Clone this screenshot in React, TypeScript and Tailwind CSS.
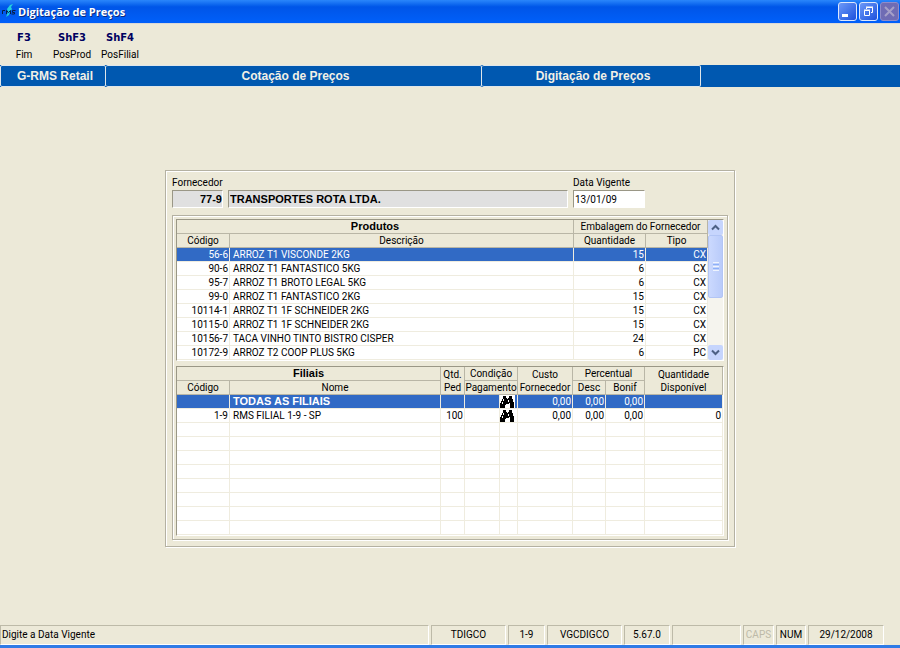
import type { ReactNode } from "react"
import clsx from "clsx"

type Product = {
  code: string
  description: string
  quantity: number
  type: string
}

type Branch = {
  code: string
  name: string
  ordered: string
  cost: string
  discount: string
  bonus: string
  available: string
}

const SHORTCUTS = [
  { keys: "F3", label: "Fim" },
  { keys: "ShF3", label: "PosProd" },
  { keys: "ShF4", label: "PosFilial" },
]

const PRODUCTS: Product[] = [
  { code: "56-6", description: "ARROZ T1 VISCONDE 2KG", quantity: 15, type: "CX" },
  { code: "90-6", description: "ARROZ T1 FANTASTICO 5KG", quantity: 6, type: "CX" },
  { code: "95-7", description: "ARROZ T1 BROTO LEGAL 5KG", quantity: 6, type: "CX" },
  { code: "99-0", description: "ARROZ T1 FANTASTICO 2KG", quantity: 15, type: "CX" },
  { code: "10114-1", description: "ARROZ T1 1F SCHNEIDER 2KG", quantity: 15, type: "CX" },
  { code: "10115-0", description: "ARROZ T1 1F SCHNEIDER 2KG", quantity: 15, type: "CX" },
  { code: "10156-7", description: "TACA VINHO TINTO BISTRO CISPER", quantity: 24, type: "CX" },
  { code: "10172-9", description: "ARROZ T2 COOP PLUS 5KG", quantity: 6, type: "PC" },
]

const BRANCHES: Branch[] = [
  { code: "", name: "TODAS AS FILIAIS", ordered: "", cost: "0,00", discount: "0,00", bonus: "0,00", available: "" },
  { code: "1-9", name: "RMS FILIAL 1-9 - SP", ordered: "100", cost: "0,00", discount: "0,00", bonus: "0,00", available: "0" },
]

const EMPTY_ROWS = 8

const SUNKEN = "border border-t-[#9a9786] border-l-[#9a9786] border-r-white border-b-white"
const ETCHED = "border border-[#b4b1a2] shadow-[inset_1px_1px_0_#fff,1px_1px_0_#fff]"
const HEAD = "whitespace-nowrap border-r border-b border-[#b9b6a6] bg-[#ece9d8] p-0 text-center font-normal"
const CELL = "h-[14px] border-r border-b border-[#efecdf] p-0"
const BOLD = "font-['Liberation_Sans',Arial,sans-serif] text-[11px] font-bold!"

const Logo = () => (
  <svg width="16" height="16" viewBox="0 0 16 16" aria-hidden="true">
    <path d="M6 5 L9 1 L12 0 L10 3 L11 5 L9 8 L8 11 L5 13 L7 8 Z" fill="#22d0dc" />
    <path d="M1.500 10V6.500H4M5.500 10V6.500l2 2 2-2V10M14.500 6.500h-3v2h2V10h-3" fill="none" stroke="#06204a" />
  </svg>
)

const Binoculars = () => (
  <svg width="14" height="12" viewBox="0 0 14 12" aria-hidden="true">
    <path
      d="M3 0h3v2h1v1h1V2h1V0h3v3h1v3h1v6h-4V9H9V8H6v1H5v3H0V7h1V5h1V3h1z"
      fill="#000"
      shapeRendering="crispEdges"
    />
    <path d="M3 3h1v2H3zM2 6h1v2H2zM8 4h1v2H8zM9 7h1v2H9z" fill="#fff" shapeRendering="crispEdges" />
  </svg>
)

const WindowButton = ({ label, disabled, children }: { label: string; disabled?: boolean; children: ReactNode }) => (
  <button
    type="button"
    aria-label={label}
    disabled={disabled}
    className={clsx(
      "flex size-[19px] items-center justify-center rounded-[3px] border",
      disabled
        ? "border-[#8f8cc9] bg-[#6f6cb4] text-[#a5a0c8]"
        : "border-[#dce7fd] bg-linear-to-br from-[#6d98f8] to-[#1c4fdc] text-white"
    )}
  >
    {children}
  </button>
)

const TitleBar = () => (
  <header className="flex h-[24px] items-center justify-between border-b border-[#d9d8d8] bg-linear-to-b from-[#2a86fb] via-[#0055e8] via-30% to-[#0060fa] pr-px pl-px">
    <div className="flex items-center gap-px">
      <Logo />
      <h1 className="pt-px font-['Open_Sans',sans-serif] text-[11px] font-bold text-white [text-shadow:1px_1px_0_#0a2a80]">
        Digitação de Preços
      </h1>
    </div>
    <div className="flex gap-[2px]">
      <WindowButton label="Minimizar">
        <svg width="13" height="13" viewBox="0 0 13 13">
          <path d="M1 9h6v3H1z" fill="currentColor" />
        </svg>
      </WindowButton>
      <WindowButton label="Restaurar">
        <svg width="13" height="13" viewBox="0 0 13 13" fill="none" stroke="currentColor">
          <path d="M4.500 4V2.500h6v5H9M4 2h7M2.500 5.500h5v5h-5zM2 5h6" />
        </svg>
      </WindowButton>
      <WindowButton label="Fechar" disabled>
        <svg width="13" height="13" viewBox="0 0 13 13" stroke="currentColor" strokeWidth="2">
          <path d="M2 2l9 9M11 2l-9 9" />
        </svg>
      </WindowButton>
    </div>
  </header>
)

const Toolbar = () => (
  <div className="flex h-[41px] items-start pt-[5px]">
    {SHORTCUTS.map(({ keys, label }) => (
      <button key={keys} type="button" className="flex w-12 flex-col items-center leading-[17px]">
        <span className="font-['DejaVu_Sans',sans-serif] text-[10px] font-bold text-[#000060]">{keys}</span>
        <span>{label}</span>
      </button>
    ))}
  </div>
)

const Tabs = () => (
  <nav className="flex h-[22px] bg-[#0058b0] font-['Liberation_Sans',Arial,sans-serif] text-[12px] leading-[21px] font-bold text-[#f2f0e6]">
    <a href="#retail" className="w-[106px] rounded-[2px] border border-[#dfe6ea] pl-1 text-center">
      G-RMS Retail
    </a>
    <a href="#cotacao" className="w-[376px] rounded-[2px] border border-l-0 border-[#dfe6ea] pl-1 text-center">
      Cotação de Preços
    </a>
    <a href="#digitacao" className="w-[219px] rounded-[2px] border border-l-0 border-[#dfe6ea] pl-1 text-center">
      Digitação de Preços
    </a>
  </nav>
)

const ScrollBar = () => (
  <div className="flex w-[15px] flex-col bg-[#f5f4ee]">
    <button type="button" aria-label="Subir" className="flex h-[15px] items-center justify-center rounded-[2px] bg-[#c6d5fd]">
      <svg width="9" height="7" viewBox="0 0 9 7" fill="none" stroke="#4d6185" strokeWidth="2">
        <path d="M1 5.500l3.500-3.500L8 5.500" />
      </svg>
    </button>
    <div className="flex h-[63px] flex-col items-center justify-center gap-px rounded-[2px] border border-[#b2c5f5] bg-linear-to-r from-[#cbd9fe] to-[#b9cbfa]">
      <span className="h-px w-[6px] bg-[#eef4fe]" />
      <span className="h-px w-[6px] bg-[#8cb0f8]" />
      <span className="h-px w-[6px] bg-[#eef4fe]" />
      <span className="h-px w-[6px] bg-[#8cb0f8]" />
      <span className="h-px w-[6px] bg-[#eef4fe]" />
    </div>
    <button type="button" aria-label="Descer" className="mt-auto flex h-[15px] items-center justify-center rounded-[2px] bg-[#c6d5fd]">
      <svg width="9" height="7" viewBox="0 0 9 7" fill="none" stroke="#4d6185" strokeWidth="2">
        <path d="M1 1.500l3.500 3.500L8 1.500" />
      </svg>
    </button>
  </div>
)

const ProductsTable = () => (
  <div className={clsx("flex bg-white", SUNKEN)}>
    <table className="flex-1 table-fixed border-separate border-spacing-0 leading-[13px]">
      <colgroup>
        <col className="w-[53px]" />
        <col />
        <col className="w-[72px]" />
        <col className="w-[62px]" />
      </colgroup>
      <thead>
        <tr className="h-[14px]">
          <th colSpan={2} className={clsx(HEAD, BOLD)}>Produtos</th>
          <th colSpan={2} className={HEAD}>Embalagem do Fornecedor</th>
        </tr>
        <tr className="h-[14px]">
          <th className={HEAD}>Código</th>
          <th className={HEAD}>Descrição</th>
          <th className={HEAD}>Quantidade</th>
          <th className={HEAD}>Tipo</th>
        </tr>
      </thead>
      <tbody>
        {PRODUCTS.map((product, index) => (
          <tr key={product.code} className={clsx(index === 0 && "bg-[#316ac5] text-white")}>
            <td className={clsx(CELL, "pr-px text-right")}>{product.code}</td>
            <td className={clsx(CELL, "pl-[3px]!")}>{product.description}</td>
            <td className={clsx(CELL, "pr-px text-right")}>{product.quantity}</td>
            <td className={clsx(CELL, "pr-px text-right")}>{product.type}</td>
          </tr>
        ))}
      </tbody>
    </table>
    <ScrollBar />
  </div>
)

const BranchesTable = () => (
  <div className={clsx("bg-white", SUNKEN)}>
    <table className="w-full table-fixed border-separate border-spacing-0 leading-[13px]">
      <colgroup>
        <col className="w-[53px]" />
        <col />
        <col className="w-[24px]" />
        <col className="w-[35px]" />
        <col className="w-[18px]" />
        <col className="w-[55px]" />
        <col className="w-[33px]" />
        <col className="w-[39px]" />
        <col className="w-[78px]" />
      </colgroup>
      <thead>
        <tr className="h-[14px]">
          <th colSpan={2} className={clsx(HEAD, BOLD)}>Filiais</th>
          <th rowSpan={2} className={HEAD}>Qtd.<br />Ped</th>
          <th colSpan={2} className={HEAD}>Condição</th>
          <th rowSpan={2} className={HEAD}>Custo<br />Fornecedor</th>
          <th colSpan={2} className={HEAD}>Percentual</th>
          <th rowSpan={2} className={HEAD}>Quantidade<br />Disponível</th>
        </tr>
        <tr className="h-[14px]">
          <th className={HEAD}>Código</th>
          <th className={HEAD}>Nome</th>
          <th colSpan={2} className={HEAD}>Pagamento</th>
          <th className={HEAD}>Desc</th>
          <th className={HEAD}>Bonif</th>
        </tr>
      </thead>
      <tbody>
        {BRANCHES.map((branch, index) => (
          <tr key={branch.name} className={clsx(index === 0 && "bg-[#316ac5] text-white")}>
            <td className={clsx(CELL, "pr-px text-right")}>{branch.code}</td>
            <td className={clsx(CELL, "pl-[3px]!", index === 0 && BOLD)}>{branch.name}</td>
            <td className={clsx(CELL, "pr-px text-right")}>{branch.ordered}</td>
            <td className={CELL} />
            <td className={CELL}>
              <button type="button" aria-label="Pesquisar condição" className="flex h-[13px] w-[15px] items-center bg-white">
                <Binoculars />
              </button>
            </td>
            <td className={clsx(CELL, "pr-px text-right")}>{branch.cost}</td>
            <td className={clsx(CELL, "pr-px text-right")}>{branch.discount}</td>
            <td className={clsx(CELL, "pr-px text-right")}>{branch.bonus}</td>
            <td className={clsx(CELL, "pr-px text-right")}>{branch.available}</td>
          </tr>
        ))}
        {Array.from({ length: EMPTY_ROWS }, (_, row) => (
          <tr key={row}>
            {Array.from({ length: 9 }, (_, column) => (
              <td key={column} className={CELL} />
            ))}
          </tr>
        ))}
      </tbody>
    </table>
  </div>
)

const StatusCell = ({ className, children }: { className: string; children?: ReactNode }) => (
  <div className={clsx("h-[20px] border border-t-[#bdbaa8] border-r-white border-b-white border-l-[#bdbaa8] text-center", className)}>
    {children}
  </div>
)

const StatusBar = () => (
  <footer className="mt-auto flex gap-[2px] border-b-[3px] border-[#2f7be6] pr-4 leading-[18px]">
    <StatusCell className="flex-1 pl-px text-left!">Digite a Data Vigente</StatusCell>
    <StatusCell className="w-[75px]">TDIGCO</StatusCell>
    <StatusCell className="w-[37px]">1-9</StatusCell>
    <StatusCell className="w-[75px]">VGCDIGCO</StatusCell>
    <StatusCell className="w-[46px]">5.67.0</StatusCell>
    <StatusCell className="w-[69px]" />
    <StatusCell className="w-[31px] text-[#bdbaa8]">CAPS</StatusCell>
    <StatusCell className="w-[30px]">NUM</StatusCell>
    <StatusCell className="w-[76px]">29/12/2008</StatusCell>
  </footer>
)

const App = () => {
  return (
    <div className="flex min-h-screen flex-col bg-[#ece9d8] font-[Roboto,sans-serif] text-[10px] text-black">
      <TitleBar />
      <Toolbar />
      <Tabs />
      <main className="px-4 pt-[83px] pb-8">
        <form className={clsx("mx-auto w-full max-w-[570px] p-[6px]", ETCHED)}>
          <div className="flex h-[38px] gap-[5px] leading-[12px]">
            <div className="flex w-[51px] flex-col gap-px">
              <label htmlFor="supplier-code">Fornecedor</label>
              <input
                id="supplier-code"
                readOnly
                defaultValue="77-9"
                className={clsx("h-[18px] w-full bg-[#e0e0e0] text-right", BOLD, SUNKEN)}
              />
            </div>
            <input
              aria-label="Nome do fornecedor"
              readOnly
              defaultValue="TRANSPORTES ROTA LTDA."
              className={clsx("mt-[13px] h-[18px] min-w-0 flex-1 bg-[#e0e0e0] pl-px", BOLD, SUNKEN)}
            />
            <div className="mr-[83px] flex w-[72px] flex-col gap-px">
              <label htmlFor="effective-date">Data Vigente</label>
              <input
                id="effective-date"
                defaultValue="13/01/09"
                className={clsx("h-[18px] w-full bg-white pl-px", SUNKEN)}
              />
            </div>
          </div>
          <div className={clsx("flex flex-col gap-[5px] p-[3px]", ETCHED)}>
            <ProductsTable />
            <BranchesTable />
          </div>
        </form>
      </main>
      <StatusBar />
    </div>
  )
}

export default App
